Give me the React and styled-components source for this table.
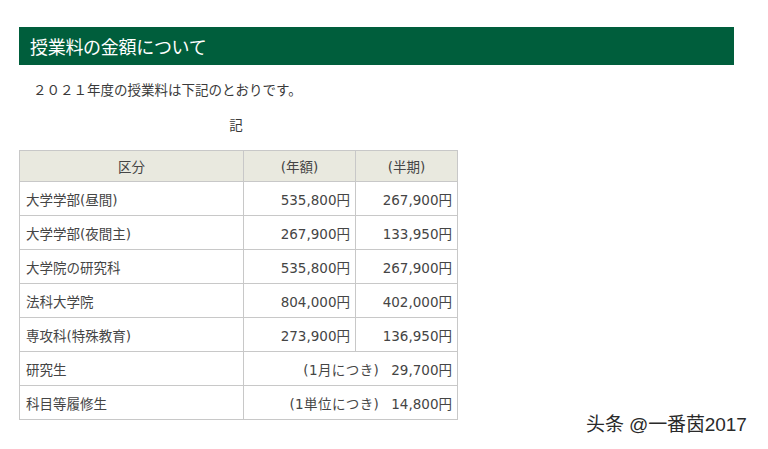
import React from "react";
import styled, { createGlobalStyle } from "styled-components";

const GlobalStyle = createGlobalStyle`
  html, body {
    margin: 0;
    padding: 0;
    background: #fff;
  }
  body {
    font-family: "Noto Sans CJK JP", "Noto Sans", sans-serif;
    color: #333;
  }
`;

const Page = styled.div`
  position: relative;
  width: 768px;
  height: 449px;
  padding: 27px 0 0 19px;
  box-sizing: border-box;
  overflow: hidden;
`;

const TitleBar = styled.h2`
  width: 715px;
  height: 38px;
  margin: 0;
  padding: 0 0 0 11px;
  box-sizing: border-box;
  display: flex;
  align-items: center;
  background: #005e3c;
  color: #fff;
  font-size: 18px;
  font-weight: 400;
  letter-spacing: -0.3px;
`;

const Lead = styled.p`
  margin: 14px 0 0 0;
  padding-left: 14px;
  font-size: 13.5px;
  line-height: 20px;
  color: #3a3a3a;
`;

const Note = styled.p`
  margin: 15px 0 0 0;
  width: 434px;
  text-align: center;
  font-size: 13.5px;
  line-height: 20px;
  color: #3a3a3a;
`;

const Table = styled.table`
  margin-top: 16px;
  border-collapse: collapse;
  width: 438px;
  table-layout: fixed;
  font-family: "DejaVu Sans", "Noto Sans CJK JP", sans-serif;
  font-size: 13.5px;
  color: #454545;
`;

const HeadCell = styled.th`
  height: 30px;
  padding: 0;
  background: #e9e9df;
  border: 1px solid #c8c8c8;
  font-weight: 400;
  text-align: center;
`;

const Cell = styled.td`
  height: 33px;
  padding: 0 ${(p) => (p.$right ? "5px" : "6px")};
  border: 1px solid #c8c8c8;
  text-align: ${(p) => (p.$right ? "right" : "left")};
  white-space: nowrap;
`;

const Unit = styled.span`
  margin-right: 12px;
  letter-spacing: 0.4px;
`;

const Watermark = styled.div`
  position: absolute;
  left: 586px;
  top: 409px;
  font-family: "Liberation Sans", "Noto Sans CJK SC", sans-serif;
  font-size: 19px;
  color: #2a2a2a;
  letter-spacing: -0.1px;
  text-shadow: 0 0 2px #fff;
`;

const rows = [
  ["大学学部(昼間)", "535,800円", "267,900円"],
  ["大学学部(夜間主)", "267,900円", "133,950円"],
  ["大学院の研究科", "535,800円", "267,900円"],
  ["法科大学院", "804,000円", "402,000円"],
  ["専攻科(特殊教育)", "273,900円", "136,950円"],
];

const perUnit = [
  ["研究生", "(1月につき)", "29,700円"],
  ["科目等履修生", "(1単位につき)", "14,800円"],
];

export default function App() {
  return (
    <>
      <GlobalStyle />
      <Page>
        <TitleBar>授業料の金額について</TitleBar>
        <Lead>２０２１年度の授業料は下記のとおりです。</Lead>
        <Note>記</Note>
        <Table>
          <colgroup>
            <col style={{ width: 224 }} />
            <col style={{ width: 112 }} />
            <col style={{ width: 102 }} />
          </colgroup>
          <thead>
            <tr>
              <HeadCell>区分</HeadCell>
              <HeadCell>(年額)</HeadCell>
              <HeadCell>(半期)</HeadCell>
            </tr>
          </thead>
          <tbody>
            {rows.map(([name, year, half]) => (
              <tr key={name}>
                <Cell>{name}</Cell>
                <Cell $right>{year}</Cell>
                <Cell $right>{half}</Cell>
              </tr>
            ))}
            {perUnit.map(([name, unit, price]) => (
              <tr key={name}>
                <Cell>{name}</Cell>
                <Cell $right colSpan={2}>
                  <Unit>{unit}</Unit>
                  {price}
                </Cell>
              </tr>
            ))}
          </tbody>
        </Table>
        <Watermark>头条 @一番茵2017</Watermark>
      </Page>
    </>
  );
}
